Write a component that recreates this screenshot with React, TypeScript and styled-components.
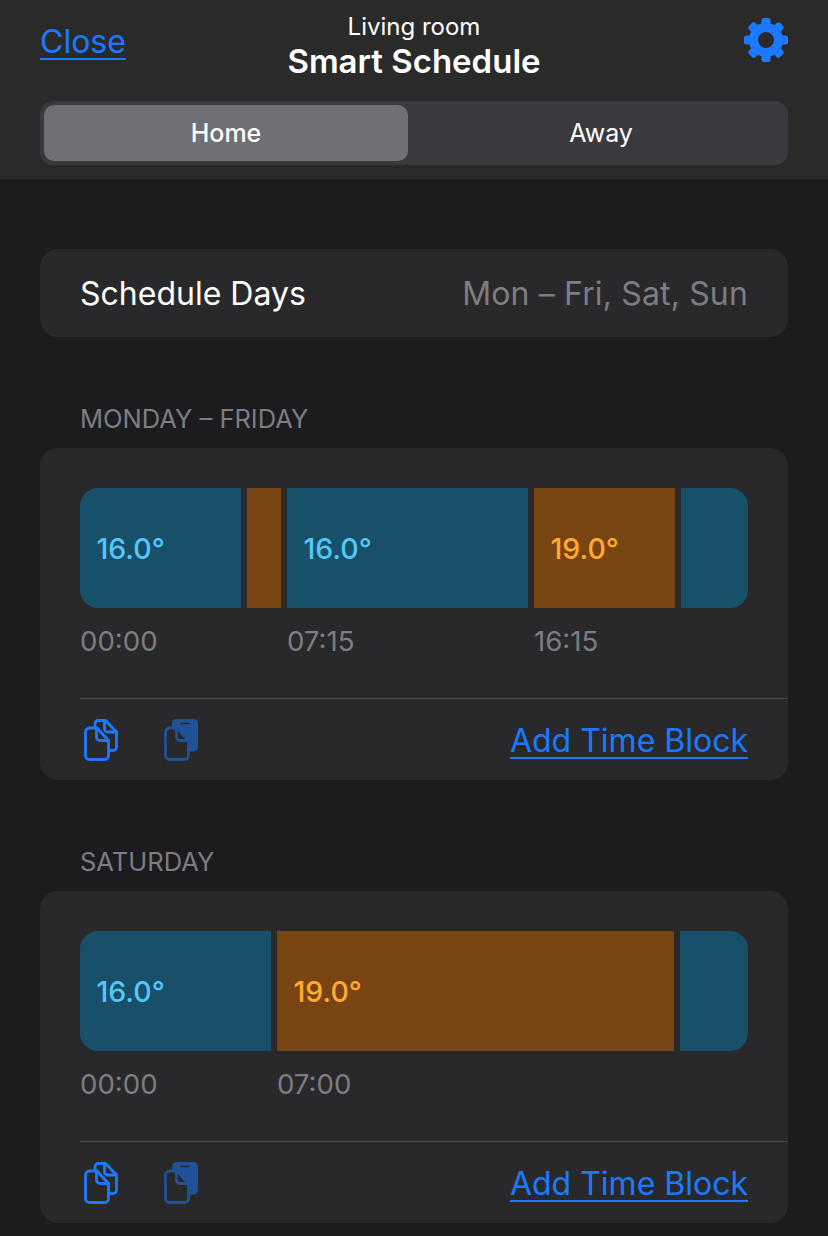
import * as React from 'react';
import styled, { createGlobalStyle } from 'styled-components';

const GlobalStyle = createGlobalStyle`
  html, body {
    margin: 0;
    padding: 0;
    background: #1c1c1e;
    font-family: Inter, "Liberation Sans", sans-serif;
    color: #fff;
  }
`;

const Page = styled.div`
  width: 828px;
  height: 1236px;
  overflow: hidden;
`;

const Header = styled.header`
  height: 179px;
  box-sizing: border-box;
  padding: 0 40px;
  background: #2a2a2b;
  display: flex;
  flex-direction: column;
`;

const TopRow = styled.div`
  height: 101px;
  display: grid;
  grid-template-columns: 1fr auto 1fr;
`;

const Close = styled.a`
  justify-self: start;
  margin-top: 23px;
  height: 38px;
  font-size: 32px;
  line-height: 38px;
  color: #1b7aff;
  text-decoration: underline;
  text-decoration-thickness: 2px;
  text-underline-offset: 5px;
`;

const Titles = styled.div`
  display: flex;
  flex-direction: column;
  align-items: center;
  padding-top: 13px;
`;

const Subtitle = styled.div`
  font-size: 24px;
  line-height: 28px;
`;

const Title = styled.div`
  font-size: 33px;
  line-height: 40px;
  font-weight: 600;
`;

const GearWrap = styled.div`
  justify-self: end;
  margin-top: 17px;
  margin-right: -1px;
  height: 46px;
`;

const Segments = styled.div`
  height: 64px;
  box-sizing: border-box;
  padding: 4px;
  background: #3a3a3e;
  border-radius: 13px;
  display: grid;
  grid-template-columns: 364px 1fr;
`;

const Segment = styled.div<{ $active?: boolean }>`
  display: flex;
  align-items: center;
  justify-content: center;
  font-size: 25px;
  font-weight: ${({ $active }) => ($active ? 500 : 400)};
  background: ${({ $active }) => ($active ? '#6f6f74' : 'transparent')};
  border-radius: 10px;
  padding-left: ${({ $active }) => ($active ? 0 : 10)}px;
`;

const Content = styled.main`
  padding: 70px 40px 0;
`;

const Card = styled.section`
  background: #29292b;
  border-radius: 18px;
`;

const DaysRow = styled(Card)`
  height: 88px;
  box-sizing: border-box;
  padding: 0 40px;
  display: flex;
  align-items: center;
  justify-content: space-between;
  font-size: 32px;
`;

const DaysValue = styled.span`
  color: #7d7d82;
  letter-spacing: 0.15px;
`;

const SectionLabel = styled.h2`
  margin: 67px 0 0 40px;
  height: 44px;
  font-size: 25.5px;
  line-height: 30px;
  font-weight: 400;
  color: #7d7d82;
`;

const ScheduleCard = styled(Card)`
  height: 332px;
  box-sizing: border-box;
  padding: 40px 0 0 40px;
`;

const Timeline = styled.div`
  width: 668px;
  height: 210px;
  display: flex;
  gap: 6px;
`;

const Block = styled.div<{ $width: number }>`
  width: ${({ $width }) => $width}px;
  flex: none;
`;

const Bar = styled.div<{ $tone: 'cold' | 'warm'; $start?: boolean; $end?: boolean }>`
  height: 120px;
  box-sizing: border-box;
  padding-left: 16.5px;
  display: flex;
  align-items: center;
  font-size: 28.5px;
  font-weight: 500;
  background: ${({ $tone }) => ($tone === 'cold' ? '#184f69' : '#784512')};
  color: ${({ $tone }) => ($tone === 'cold' ? '#55c8fb' : '#feaa33')};
  border-radius: ${({ $start, $end }) =>
    `${$start ? 18 : 0}px ${$end ? 18 : 0}px ${$end ? 18 : 0}px ${$start ? 18 : 0}px`};
`;

const Time = styled.div`
  margin-top: 17px;
  font-size: 27.6px;
  line-height: 33px;
  color: #7d7d82;
  white-space: nowrap;
`;

const Footer = styled.div`
  border-top: 1px solid #4a4a4c;
  height: 81px;
  box-sizing: border-box;
  padding-right: 40px;
  display: flex;
  align-items: center;
`;

const IconGroup = styled.div`
  display: flex;
  gap: 46px;
  margin-left: 4px;
  margin-top: 1px;
`;

const AddLink = styled.a`
  margin-left: auto;
  margin-top: 4px;
  font-size: 32px;
  line-height: 40px;
  color: #1b7aff;
  text-decoration: underline;
  text-decoration-thickness: 2px;
  text-underline-offset: 5px;
`;

const GearIcon = () => {
  const teeth = [0, 45, 90, 135, 180, 225, 270, 315];
  return (
    <svg width="46" height="46" viewBox="0 0 46 46">
      <g fill="#1b7aff">
        {teeth.map((angle) => (
          <rect key={angle} x="18.5" y="1" width="9" height="12" rx="2.5" transform={`rotate(${angle} 23 23)`} />
        ))}
      </g>
      <circle cx="23" cy="23" r="12.5" fill="none" stroke="#1b7aff" strokeWidth="9" />
    </svg>
  );
};

const frontPage = 'M1.5 13 a4 4 0 0 1 4-4 h7.5 l11.5 12.5 V36.5 a4 4 0 0 1-4 4 H5.5 a4 4 0 0 1-4-4 Z';
const frontFold = 'M12.5 9 v9 a3.5 3.5 0 0 0 3.5 3.5 h8.5';

const CopyIcon = () => (
  <svg width="34" height="42" viewBox="0 0 34 42" fill="none" stroke="#1b7aff" strokeWidth="2.8" strokeLinejoin="round" strokeLinecap="round">
    <path d="M11 8 V5 a3.5 3.5 0 0 1 3.5-3.5 h7 l11 11.5 V28 a3.5 3.5 0 0 1-3.5 3.5 h-3.5" />
    <path d="M20.5 2 v8 a3 3 0 0 0 3 3 h9" />
    <path d={frontPage} />
    <path d={frontFold} />
  </svg>
);

const PasteIcon = () => (
  <svg width="34" height="42" viewBox="0 0 34 42" fill="none" stroke="#1f5297" strokeWidth="2.8" strokeLinejoin="round" strokeLinecap="round">
    <rect x="8" y="0" width="26" height="32.5" rx="4.5" fill="#1f5297" stroke="none" />
    <path d="M17 4.5 h8" stroke="#29292b" strokeWidth="1.6" />
    <path d={frontPage} fill="#29292b" />
    <path d={frontFold} />
  </svg>
);

interface BlockData {
  width: number;
  tone: 'cold' | 'warm';
  temp?: string;
  time?: string;
}

const weekdays: BlockData[] = [
  { width: 161, tone: 'cold', temp: '16.0°', time: '00:00' },
  { width: 34, tone: 'warm' },
  { width: 241, tone: 'cold', temp: '16.0°', time: '07:15' },
  { width: 141, tone: 'warm', temp: '19.0°', time: '16:15' },
  { width: 67, tone: 'cold' },
];

const saturday: BlockData[] = [
  { width: 191, tone: 'cold', temp: '16.0°', time: '00:00' },
  { width: 397, tone: 'warm', temp: '19.0°', time: '07:00' },
  { width: 68, tone: 'cold' },
];

function Schedule({ blocks }: { blocks: BlockData[] }) {
  return (
    <ScheduleCard>
      <Timeline>
        {blocks.map((block, i) => (
          <Block key={i} $width={block.width}>
            <Bar $tone={block.tone} $start={i === 0} $end={i === blocks.length - 1}>
              {block.temp}
            </Bar>
            {block.time && <Time>{block.time}</Time>}
          </Block>
        ))}
      </Timeline>
      <Footer>
        <IconGroup>
          <CopyIcon />
          <PasteIcon />
        </IconGroup>
        <AddLink>Add Time Block</AddLink>
      </Footer>
    </ScheduleCard>
  );
}

export default function App() {
  return (
    <Page>
      <GlobalStyle />
      <Header>
        <TopRow>
          <Close>Close</Close>
          <Titles>
            <Subtitle>Living room</Subtitle>
            <Title>Smart Schedule</Title>
          </Titles>
          <GearWrap>
            <GearIcon />
          </GearWrap>
        </TopRow>
        <Segments>
          <Segment $active>Home</Segment>
          <Segment>Away</Segment>
        </Segments>
      </Header>
      <Content>
        <DaysRow>
          <span>Schedule Days</span>
          <DaysValue>Mon – Fri, Sat, Sun</DaysValue>
        </DaysRow>
        <SectionLabel>MONDAY – FRIDAY</SectionLabel>
        <Schedule blocks={weekdays} />
        <SectionLabel>SATURDAY</SectionLabel>
        <Schedule blocks={saturday} />
      </Content>
    </Page>
  );
}
